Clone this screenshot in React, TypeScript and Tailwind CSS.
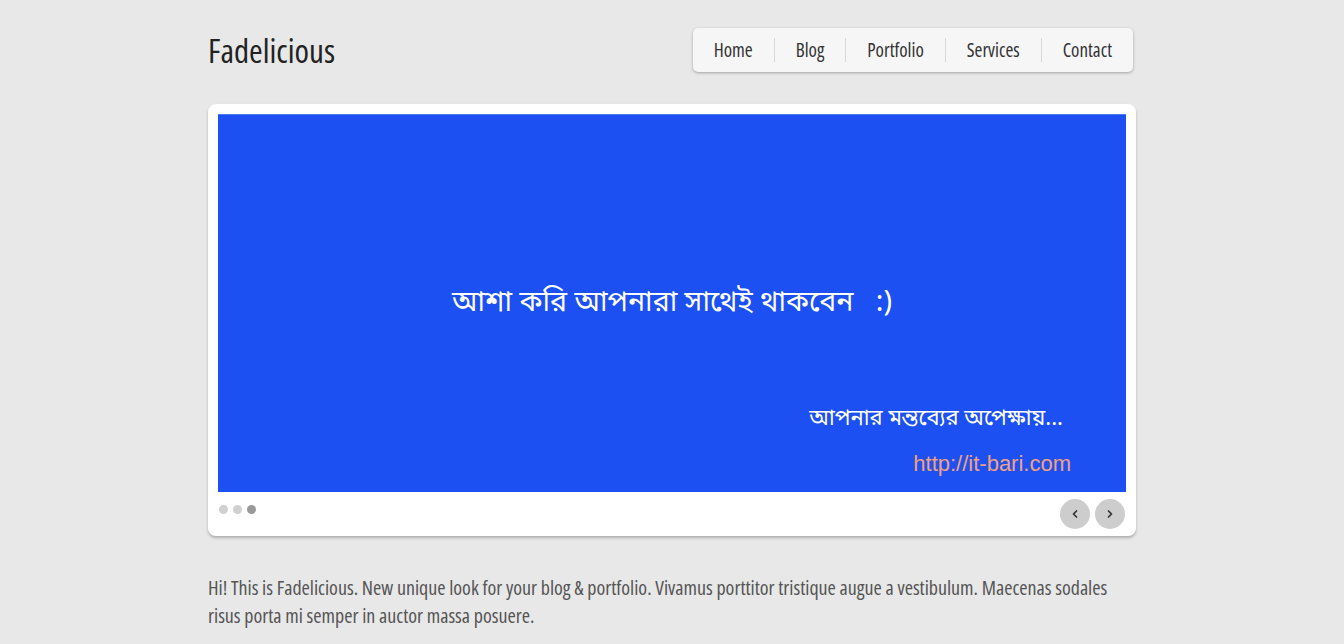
import { ChevronLeft, ChevronRight } from 'lucide-react'

const NAV = ['Home', 'Blog', 'Portfolio', 'Services', 'Contact']

export default function App() {
  return (
    <div className="min-h-screen bg-[#e8e8e8] text-[#333] font-['Open_Sans',sans-serif]">
      <div className="w-[928px] mx-auto pt-[28px]">
        {/* header */}
        <header className="flex items-start justify-between">
          <h1 className="text-[33px] leading-[44px] text-[#222] font-stretch-[76%] pt-[1px]">
            Fadelicious
          </h1>
          <nav className="mr-[3px] flex items-center h-[44px] bg-[#f6f6f6] rounded-[5px] shadow-[0_1px_3px_rgba(0,0,0,0.3)]">
            {NAV.map((item, i) => (
              <div key={item} className="flex items-center">
                {i > 0 && <span className="w-px h-[24px] bg-[#d8d8d8]" />}
                <a href="#" className="px-[21px] text-[19px] text-[#333] font-stretch-[81%]">
                  {item}
                </a>
              </div>
            ))}
          </nav>
        </header>

        {/* slider */}
        <section className="mt-[31px] bg-white rounded-[8px] shadow-[0_2px_3px_rgba(0,0,0,0.25)] p-[10px] pb-[6px]">
          <div className="relative h-[378px] bg-[#1c50f2] border-t border-[#4f78ee] text-white font-['Noto_Sans_Bengali','Lohit_Bengali','FreeSans',sans-serif]">
            <p className="absolute left-0 right-0 top-[170px] text-center text-[28.5px] leading-[38px]">
              আশা করি আপনারা সাথেই থাকবেন&nbsp;&nbsp;&nbsp;:)
            </p>
            <p className="absolute right-[63px] top-[290px] text-[22px] leading-[30px]">
              আপনার মন্তব্যের অপেক্ষায়...
            </p>
            <p className="absolute right-[55px] top-[335px] text-[22px] leading-[28px] text-[#f2a07e] font-['Liberation_Sans',Arial,sans-serif]">
              http://it-bari.com
            </p>
          </div>
          <div className="flex items-center justify-between h-[38px]">
            <div className="flex items-center gap-[5px] pl-[1px] -mt-[3px]">
              <span className="w-[9px] h-[9px] rounded-full bg-[#d0d0d0]" />
              <span className="w-[9px] h-[9px] rounded-full bg-[#d0d0d0]" />
              <span className="w-[9px] h-[9px] rounded-full bg-[#999]" />
            </div>
            <div className="flex items-center gap-[5px] mr-[1px] mt-[5px]">
              <button className="w-[30px] h-[30px] rounded-full bg-[#cdcdcd] flex items-center justify-center text-[#333]">
                <ChevronLeft size={12} strokeWidth={3.5} />
              </button>
              <button className="w-[30px] h-[30px] rounded-full bg-[#cdcdcd] flex items-center justify-center text-[#333]">
                <ChevronRight size={12} strokeWidth={3.5} />
              </button>
            </div>
          </div>
        </section>

        {/* intro */}
        <p className="mt-[38px] text-[20px] leading-[28px] text-[#555] font-stretch-[82%]">
          Hi! This is Fadelicious. New unique look for your blog &amp; portfolio. Vivamus porttitor tristique augue a vestibulum. Maecenas sodales risus porta mi semper in auctor massa posuere.
        </p>
      </div>
    </div>
  )
}
